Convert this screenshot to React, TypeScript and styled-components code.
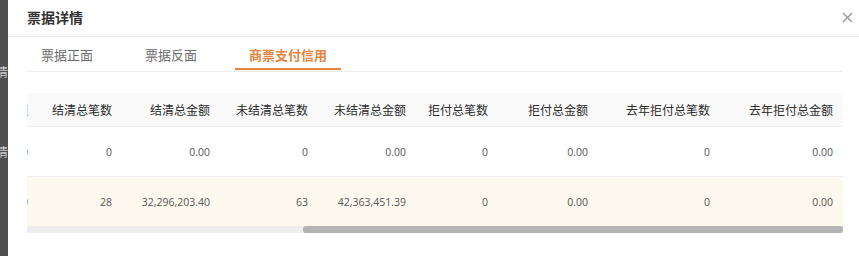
import React, { useLayoutEffect, useRef, useState } from "react";
import styled, { createGlobalStyle } from "styled-components";

interface Column {
  key: string;
  title: string;
  width: number;
  align?: "left" | "right";
}

type Row = Record<string, string>;

const GlobalStyle = createGlobalStyle`
  html, body {
    margin: 0;
    padding: 0;
    background: #ffffff;
    overflow: hidden;
  }
  body {
    font-family: "Noto Sans CJK SC", "Microsoft YaHei", sans-serif;
  }
`;

const Page = styled.div`
  display: flex;
  width: 859px;
  height: 256px;
  overflow: hidden;
`;

const Backdrop = styled.div`
  width: 8px;
  flex-shrink: 0;
  background-color: #4f4f4f;
  display: flex;
  flex-direction: column;
  overflow: hidden;
`;

const BackdropGlyph = styled.div<{ $top: number }>`
  display: flex;
  justify-content: flex-end;
  margin-top: ${(p) => p.$top}px;
  font-size: 12px;
  line-height: 14px;
  color: #c8c8c8;
  white-space: nowrap;
`;

const Modal = styled.div`
  flex: 1;
  min-width: 0;
  background-color: #ffffff;
  display: flex;
  flex-direction: column;
`;

const ModalHeader = styled.div`
  height: 34px;
  display: flex;
  align-items: center;
  justify-content: space-between;
  padding: 0 6px 2px 19px;
  border-bottom: 1px solid #ececec;
`;

const ModalTitle = styled.h3`
  margin: 0;
  font-size: 14px;
  font-weight: 700;
  color: #333333;
`;

const CloseButton = styled.button`
  width: 12px;
  height: 12px;
  padding: 0;
  border: none;
  background: none;
  display: flex;
  align-items: center;
  justify-content: center;
  cursor: pointer;
`;

const ModalBody = styled.div`
  padding: 0 16px 0 19px;
`;

const TabBar = styled.div`
  display: flex;
  gap: 24px;
  height: 34px;
  border-bottom: 1px solid #ececec;
`;

const Tab = styled.div<{ $active?: boolean }>`
  display: flex;
  align-items: center;
  padding: 4px 14px 0;
  font-size: 13px;
  font-weight: ${(p) => (p.$active ? 700 : 400)};
  color: ${(p) => (p.$active ? "#e5843d" : "#6b6b6b")};
  border-bottom: 2px solid ${(p) => (p.$active ? "#e5843d" : "transparent")};
  margin-bottom: 1px;
  cursor: pointer;
`;

const TableScroll = styled.div`
  margin-top: 21px;
  overflow-x: auto;
  scrollbar-width: none;

  &::-webkit-scrollbar {
    display: none;
  }
`;

const Table = styled.table`
  border-collapse: collapse;
  table-layout: fixed;
`;

const HeadCell = styled.th<{ $align?: string }>`
  height: 33px;
  padding: 0 10px;
  background-color: #fafafa;
  color: #2b2b2b;
  font-size: 12px;
  font-weight: 400;
  text-align: ${(p) => p.$align || "right"};
  white-space: nowrap;
  overflow: hidden;
`;

const BodyRow = styled.tr<{ $highlight?: boolean }>`
  background-color: ${(p) => (p.$highlight ? "#fdf9ee" : "#ffffff")};
  border-top: 1px solid #efefef;
`;

const BodyCell = styled.td<{ $align?: string }>`
  height: 49px;
  padding: 0 10px;
  color: #555555;
  font-family: "Open Sans", "Noto Sans CJK SC", sans-serif;
  font-size: 10.5px;
  text-align: ${(p) => p.$align || "right"};
  white-space: nowrap;
  overflow: hidden;
`;

const ScrollTrack = styled.div`
  display: flex;
  height: 7px;
  background-color: #eeeeee;
`;

const ScrollThumb = styled.div`
  height: 7px;
  border-radius: 3px;
  background-color: #b3b3b3;
`;

const columns: Column[] = [
  { key: "acceptor", title: "承兑人名称", width: 180, align: "left" },
  { key: "totalCount", title: "承兑总笔数", width: 120 },
  { key: "totalAmount", title: "承兑总金额", width: 128 },
  { key: "settledCount", title: "结清总笔数", width: 84 },
  { key: "settledAmount", title: "结清总金额", width: 98 },
  { key: "unsettledCount", title: "未结清总笔数", width: 98 },
  { key: "unsettledAmount", title: "未结清总金额", width: 98 },
  { key: "rejectCount", title: "拒付总笔数", width: 82 },
  { key: "rejectAmount", title: "拒付总金额", width: 100 },
  { key: "lastYearRejectCount", title: "去年拒付总笔数", width: 122 },
  { key: "lastYearRejectAmount", title: "去年拒付总金额", width: 123 },
];

const rows: Row[] = [
  {
    acceptor: "承兑人A",
    totalCount: "0",
    totalAmount: "0.00",
    settledCount: "0",
    settledAmount: "0.00",
    unsettledCount: "0",
    unsettledAmount: "0.00",
    rejectCount: "0",
    rejectAmount: "0.00",
    lastYearRejectCount: "0",
    lastYearRejectAmount: "0.00",
  },
  {
    acceptor: "承兑人B",
    totalCount: "91",
    totalAmount: "74,659,654.79",
    settledCount: "28",
    settledAmount: "32,296,203.40",
    unsettledCount: "63",
    unsettledAmount: "42,363,451.39",
    rejectCount: "0",
    rejectAmount: "0.00",
    lastYearRejectCount: "0",
    lastYearRejectAmount: "0.00",
  },
];

const tabs = ["票据正面", "票据反面", "商票支付信用"];

export default function App() {
  const scrollRef = useRef<HTMLDivElement>(null);
  const [thumb, setThumb] = useState({ offset: 0, size: 100 });

  // table starts scrolled all the way right, like the screenshot
  useLayoutEffect(() => {
    const el = scrollRef.current;
    if (!el) return;
    el.scrollLeft = el.scrollWidth - el.clientWidth;
    const size = (el.clientWidth / el.scrollWidth) * 100;
    const offset = (el.scrollLeft / el.scrollWidth) * 100;
    setThumb({ offset, size });
  }, []);

  const tableWidth = columns.reduce((sum, c) => sum + c.width, 0);

  return (
    <>
      <GlobalStyle />
      <Page>
        <Backdrop>
          <BackdropGlyph $top={65}>情</BackdropGlyph>
          <BackdropGlyph $top={66}>情</BackdropGlyph>
        </Backdrop>
        <Modal>
          <ModalHeader>
            <ModalTitle>票据详情</ModalTitle>
            <CloseButton aria-label="关闭">
              <svg width="11" height="11" viewBox="0 0 11 11">
                <path d="M1 1 L10 10 M10 1 L1 10" stroke="#8c8c8c" strokeWidth="1.1" fill="none" />
              </svg>
            </CloseButton>
          </ModalHeader>
          <ModalBody>
            <TabBar>
              {tabs.map((t, i) => (
                <Tab key={t} $active={i === 2}>
                  {t}
                </Tab>
              ))}
            </TabBar>
            <TableScroll ref={scrollRef}>
              <Table style={{ width: tableWidth }}>
                <colgroup>
                  {columns.map((c) => (
                    <col key={c.key} style={{ width: c.width }} />
                  ))}
                </colgroup>
                <thead>
                  <tr>
                    {columns.map((c) => (
                      <HeadCell key={c.key} $align={c.align}>
                        {c.title}
                      </HeadCell>
                    ))}
                  </tr>
                </thead>
                <tbody>
                  {rows.map((row, i) => (
                    <BodyRow key={i} $highlight={i === 1}>
                      {columns.map((c) => (
                        <BodyCell key={c.key} $align={c.align}>
                          {row[c.key]}
                        </BodyCell>
                      ))}
                    </BodyRow>
                  ))}
                </tbody>
              </Table>
            </TableScroll>
            <ScrollTrack>
              <ScrollThumb
                style={{ marginLeft: `${thumb.offset}%`, width: `${thumb.size}%` }}
              />
            </ScrollTrack>
          </ModalBody>
        </Modal>
      </Page>
    </>
  );
}
